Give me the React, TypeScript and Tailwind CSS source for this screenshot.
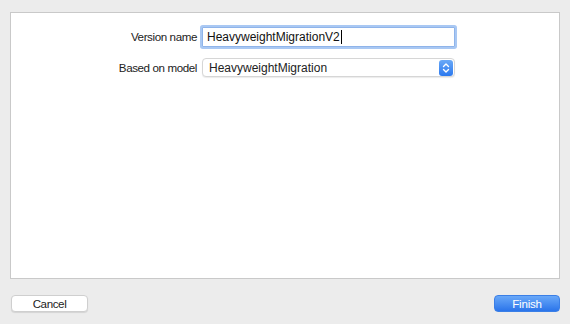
import React from "react";

export default function App() {
  return (
    <div
      className="w-[570px] h-[324px] bg-[#ececec] flex flex-col"
      style={{ fontFamily: '"Liberation Sans", Arial, sans-serif' }}
    >
      <div className="ml-[10px] mt-[12px] w-[550px] h-[267px] bg-white border border-[#c9c9c9] pt-[14px]">
        <div className="grid grid-cols-[186px_253px] gap-x-[5px] gap-y-[11px] items-center">
          <div className="text-right text-[11.6px] tracking-[-0.4px] text-[#222]">Version name</div>
          <div className="h-[20px] border border-[#8fb4ea] shadow-[0_0_0_2px_#a9c8f3] rounded-[1px] bg-white flex items-center pl-[4px] text-[12px] text-[#111]">
            HeavyweightMigrationV2
            <span className="inline-block w-[1px] h-[14px] bg-black ml-[1px]" />
          </div>
          <div className="text-right text-[11.6px] tracking-[-0.4px] text-[#222]">Based on model</div>
          <div className="h-[19px] rounded-[4px] bg-white border border-[#d6d6d6] shadow-[0_1px_1px_rgba(0,0,0,0.08)] flex items-center justify-between pl-[6px] pr-[1px] text-[12px] text-[#222]">
            <span>HeavyweightMigration</span>
            <span className="w-[14px] h-[16px] rounded-[3px] bg-gradient-to-b from-[#6aa9f7] to-[#2a78ee] flex items-center justify-center">
              <svg width="8" height="12" viewBox="0 0 8 12" fill="none" stroke="white" strokeWidth="1.4" strokeLinecap="round" strokeLinejoin="round">
                <path d="M1.5 4.5 L4 2 L6.5 4.5" />
                <path d="M1.5 7.5 L4 10 L6.5 7.5" />
              </svg>
            </span>
          </div>
        </div>
      </div>
      <div className="flex justify-between mt-[16px] ml-[11px] mr-[10px]">
        <button className="w-[77px] h-[17px] bg-white rounded-[4px] border border-[#cfcfcf] shadow-[0_1px_1px_rgba(0,0,0,0.1)] text-[11.6px] tracking-[-0.4px] text-[#222] flex items-center justify-center leading-none">
          Cancel
        </button>
        <button className="w-[66px] h-[17px] rounded-[4px] bg-gradient-to-b from-[#69a8f8] to-[#2a74ea] border border-[#3b7fe6] text-[11.6px] tracking-[-0.2px] text-white flex items-center justify-center leading-none">
          Finish
        </button>
      </div>
    </div>
  );
}
